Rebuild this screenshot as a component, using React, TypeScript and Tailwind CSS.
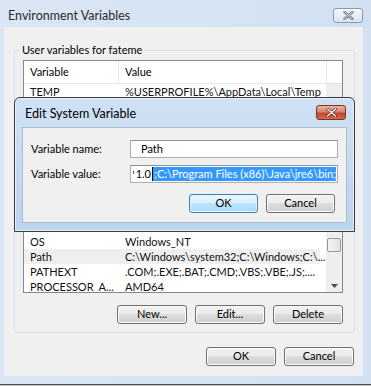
import React from "react";

const btn =
  "h-[19px] w-[70px] rounded-[3px] border border-[#707070] bg-[linear-gradient(#f2f2f2_0%,#ebebeb_49%,#dddddd_50%,#cfcfcf_100%)] text-[11px] text-black flex items-center justify-center shadow-[inset_0_0_0_1px_#fcfcfc]";

const btnFocus =
  "h-[19px] rounded-[3px] border border-[#3c7fb1] bg-[linear-gradient(#eaf6fd_0%,#d9f0fc_49%,#bee6fd_50%,#a7d9f5_100%)] text-[11px] text-black flex items-center justify-center shadow-[inset_0_0_0_1px_#e8f6fd]";

function Row({ name, value, hl }: { name: string; value: string; hl?: boolean }) {
  return (
    <div className={`flex h-[15px] w-[296px] shrink-0 items-center text-[11px] leading-[15px] text-[#111] ${hl ? "bg-[#efefef]" : ""}`}>
      <div className="w-[95px] shrink-0 whitespace-nowrap overflow-hidden pl-[6px]">{name}</div>
      <div className="flex-1 whitespace-nowrap pl-[6px]">{value}</div>
    </div>
  );
}

export default function App() {
  return (
    <div className="relative h-[386px] w-[371px] overflow-hidden bg-[linear-gradient(90deg,#dae6f4,#d2e1f2)] font-['Lato',sans-serif]">
      {/* Title bar */}
      <div className="flex h-[27px] items-center justify-between pl-[8px] pr-[8px]">
        <span className="text-[12.5px] text-[#2a2a2a] mt-[6px]">Environment Variables</span>
        <div className="mt-[4px] flex h-[15px] w-[30px] items-center justify-center rounded-[3px] border border-[#8c99ab] bg-[linear-gradient(#f4f7fb,#dce5ef)]">
          <svg width="11" height="9" viewBox="0 0 11 9">
            <path d="M1.5 1 L9.5 8 M9.5 1 L1.5 8" stroke="#6b7888" strokeWidth="2.4" strokeLinecap="round" />
            <path d="M1.5 1 L9.5 8 M9.5 1 L1.5 8" stroke="#f2f4f7" strokeWidth="0.9" strokeLinecap="round" />
          </svg>
        </div>
      </div>

      {/* Client area */}
      <div className="ml-[4px] flex h-[349px] w-[359px] flex-col bg-[#f0f0f0]">
        {/* Group box */}
        <div className="relative ml-[10px] mt-[23px] flex h-[283px] w-[341px] flex-col rounded-[3px] border border-[#d5dfe5] pl-[8px] pt-[9px]">
          <span className="absolute left-[5px] top-[-9px] bg-[#f0f0f0] px-[2px] text-[11px] text-black">
            User variables for fateme
          </span>
          {/* List view */}
          <div className="flex h-[233px] w-[320px] flex-col overflow-hidden border border-[#828790] bg-white">
            <div className="flex h-[23px] shrink-0 items-center border-b border-[#e5e5e5] text-[11px] text-black">
              <div className="flex h-full w-[95px] items-center border-r border-[#e5e5e5] pl-[6px]">Variable</div>
              <div className="flex h-full w-[208px] items-center border-r border-[#e5e5e5] pl-[6px]">Value</div>
              <div className="flex-1" />
            </div>
            <div className="flex flex-1">
              <div className="w-[302px] flex flex-col overflow-hidden">
                <Row name="TEMP" value="%USERPROFILE%\AppData\Local\Temp" />
                <div className="h-[135px] shrink-0" />
                <Row name="OS" value="Windows_NT" />
                <Row name="Path" value="C:\Windows\system32;C:\Windows;C:\..." hl />
                <Row name="PATHEXT" value=".COM;.EXE;.BAT;.CMD;.VBS;.VBE;.JS;...." />
                <Row name="PROCESSOR_A..." value="AMD64" />
              </div>
              <div className="ml-[1px] flex w-[16px] flex-col items-center bg-[#eeeeee]">
                <div className="h-[154px] shrink-0" />
                <div className="h-[14px] w-[14px] rounded-[2px] border border-[#979797] bg-[linear-gradient(90deg,#f4f4f4,#e2e2e2)]" />
                <div className="flex-1" />
                <div className="flex h-[16px] items-center justify-center">
                  <svg width="7" height="4" viewBox="0 0 7 4">
                    <path d="M0 0 H7 L3.5 4 Z" fill="#4d4d4d" />
                  </svg>
                </div>
              </div>
            </div>
          </div>
          {/* Buttons */}
          <div className="mt-[12px] flex w-[320px] justify-end gap-[8px]">
            <div className={btn}>New...</div>
            <div className={btn}>Edit...</div>
            <div className={btn}>Delete</div>
          </div>
        </div>
        <div className="mr-[9px] mt-[14px] flex justify-end gap-[8px]">
          <div className={`${btn} border-[#4a4a4a]`}>OK</div>
          <div className={btn}>Cancel</div>
        </div>
      </div>
      <div className="mt-[8px] h-[2px] border-t border-[#4d4d4d] bg-[#c9c9c9]" />

      {/* Edit System Variable dialog (overlaid) */}
      <div className="absolute left-[14px] top-[97px] flex h-[135px] w-[341px] flex-col rounded-t-[6px] border border-[#3a3a3a] bg-[linear-gradient(#d0e1f4,#bcd3ec)] shadow-[inset_0_0_0_1px_#e7f0fa]">
        <div className="flex h-[29px] shrink-0 items-center justify-between pl-[10px] pr-[8px]">
          <span className="mt-[4px] text-[12.5px] text-black">Edit System Variable</span>
          <div className="flex h-[15px] w-[30px] items-center justify-center rounded-[3px] border border-[#7b3326] bg-[linear-gradient(#eab3a6_0%,#d9826f_45%,#c4442d_55%,#d36a50_100%)]">
            <svg width="11" height="9" viewBox="0 0 11 9">
              <path d="M1.5 1 L9.5 8 M9.5 1 L1.5 8" stroke="#5a1a10" strokeWidth="2.6" strokeLinecap="round" />
              <path d="M1.5 1 L9.5 8 M9.5 1 L1.5 8" stroke="#ffffff" strokeWidth="1.4" strokeLinecap="round" />
            </svg>
          </div>
        </div>
        <div className="mx-[7px] flex h-[96px] flex-col border border-[#a9bcd2] bg-[#f0f0f0] pl-[8px] pr-[8px] pt-[12px]">
          <div className="flex h-[18px] items-center">
            <span className="w-[99px] text-[11px] text-black">Variable name:</span>
            <div className="flex h-[18px] w-[208px] items-center border border-[#abadb3] border-t-[#8e9299] bg-white pl-[10px] text-[11px] text-black">
              Path
            </div>
          </div>
          <div className="mt-[7px] flex h-[18px] items-center">
            <span className="w-[99px] text-[11px] text-black">Variable value:</span>
            <div className="flex h-[18px] w-[208px] items-center overflow-hidden border border-[#abadb3] border-t-[#8e9299] bg-white text-[11px] text-black">
              <div className="flex w-[21px] shrink-0 items-center justify-end gap-[2px] pr-[1px]">
                <div className="mb-[4px] h-[3px] w-[1px] bg-[#555]" />
                <span>1.0</span>
              </div>
              <div className="flex h-[14px] flex-1 items-center whitespace-nowrap border-l border-black bg-[#3399ff] pl-[1px] text-white">
                ;C:\Program Files (x86)\Java\jre6\bin;
              </div>
              <div className="w-[1px] shrink-0" />
            </div>
          </div>
          <div className="mt-[11px] flex justify-end gap-[8px] pr-[3px]">
            <div className={`${btnFocus} w-[69px]`}>OK</div>
            <div className={btn.replace("w-[70px]", "w-[69px]")}>Cancel</div>
          </div>
        </div>
      </div>
    </div>
  );
}
